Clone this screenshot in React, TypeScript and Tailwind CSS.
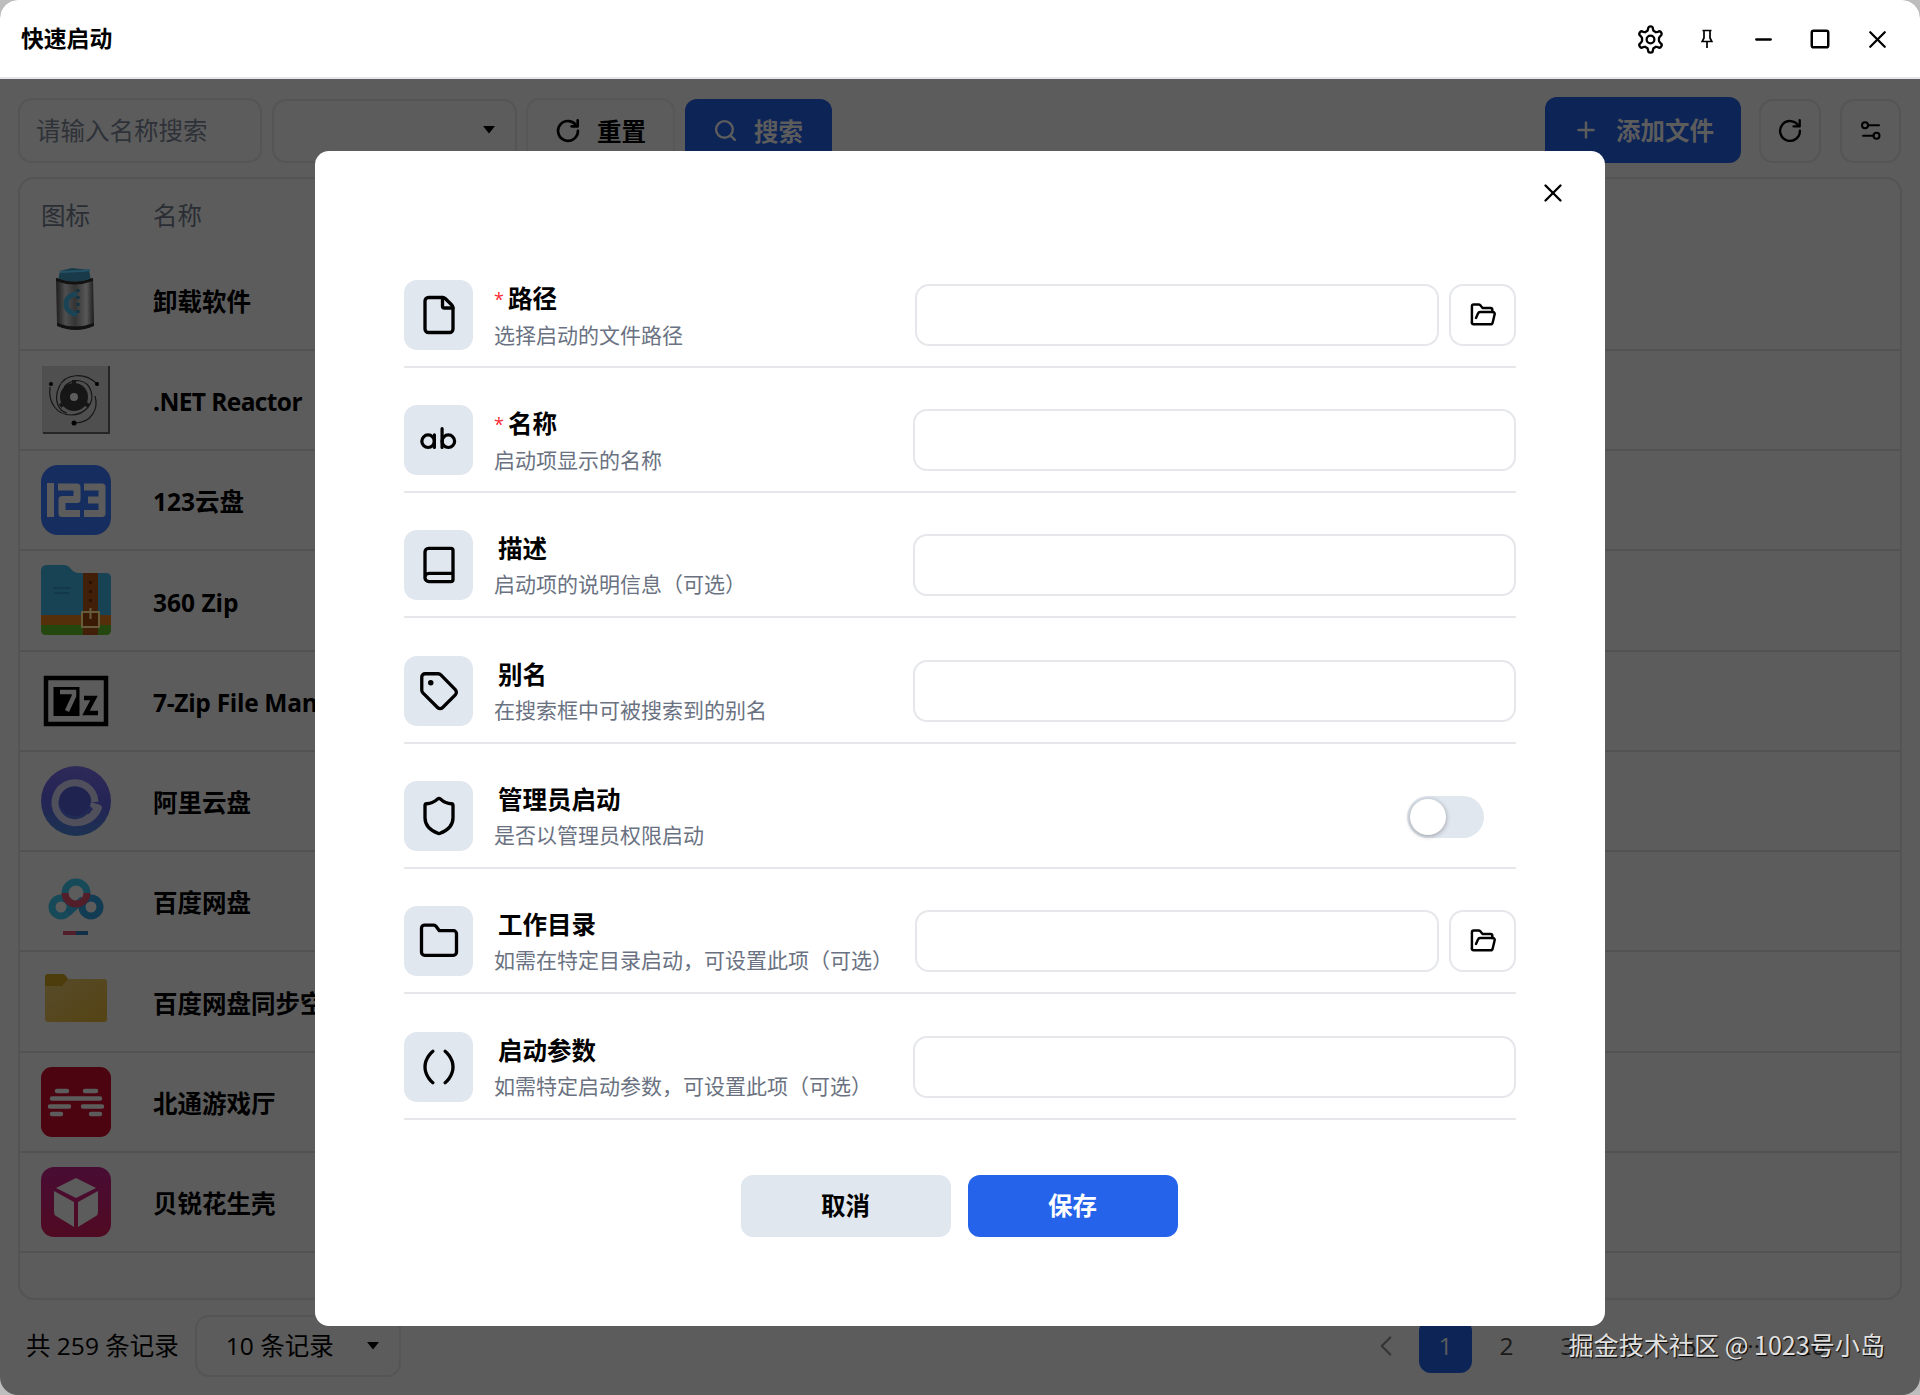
import React from 'react';
import { File, Plus, Search, X, Square, Minus, ChevronLeft, ChevronRight } from 'lucide-react';

const APPS = [
  { name: '卸载软件', icon: UninstallIcon },
  { name: '.NET Reactor', icon: ReactorIcon, nameClass: 'tracking-[-0.6px]' },
  { name: '123云盘', icon: Pan123Icon },
  { name: '360 Zip', icon: Zip360Icon },
  { name: '7-Zip File Manager', icon: SevenZipIcon, nameClass: 'tracking-[-0.3px]' },
  { name: '阿里云盘', icon: AliIcon },
  { name: '百度网盘', icon: BaiduIcon },
  { name: '百度网盘同步空间', icon: YellowFolderIcon },
  { name: '北通游戏厅', icon: BeitongIcon },
  { name: '贝锐花生壳', icon: BoxIcon },
];

const FIELDS = [
  { label: '路径', desc: '选择启动的文件路径', icon: <File size={42} strokeWidth={1.9} />, required: true, type: 'file' },
  { label: '名称', desc: '启动项显示的名称', icon: <AbIcon />, required: true, type: 'text' },
  { label: '描述', desc: '启动项的说明信息（可选）', icon: <BookIcon />, type: 'text' },
  { label: '别名', desc: '在搜索框中可被搜索到的别名', icon: <TagIcon />, type: 'text' },
  { label: '管理员启动', desc: '是否以管理员权限启动', icon: <ShieldIcon />, type: 'switch' },
  { label: '工作目录', desc: '如需在特定目录启动，可设置此项（可选）', icon: <FolderIcon />, type: 'file' },
  { label: '启动参数', desc: '如需特定启动参数，可设置此项（可选）', icon: <ParenIcon />, type: 'text' },
];

function Stroke({ size = 42, width = 1.9, children }: { size?: number; width?: number; children: React.ReactNode }) {
  return (
    <svg width={size} height={size} viewBox="0 0 24 24" fill="none" stroke="currentColor" strokeWidth={width} strokeLinecap="round" strokeLinejoin="round">
      {children}
    </svg>
  );
}

function AbIcon() {
  return (
    <Stroke size={43} width={1.8}>
      <circle cx="6.200" cy="12.400" r="3.500" />
      <path d="M9.700 8.900v7M14 5.400v10.500" />
      <circle cx="17.500" cy="12.400" r="3.500" />
    </Stroke>
  );
}

function BookIcon() {
  return (
    <Stroke>
      <path d="M4 19V4.500A2 2 0 0 1 6 2.500H18.800A1.200 1.200 0 0 1 20 3.700V20.300A1.200 1.200 0 0 1 18.800 21.500H6.300A2.300 2.300 0 0 1 6.300 16.800H20" />
    </Stroke>
  );
}

function TagIcon() {
  return (
    <Stroke size={44} width={1.8}>
      <path d="M11.600 2.600H4.400A1.800 1.800 0 0 0 2.600 4.400v7.200a2 2 0 0 0 .6 1.400l8 8a2 2 0 0 0 2.800 0l6.900-6.900a2 2 0 0 0 0-2.800l-7.900-8.100A2 2 0 0 0 11.600 2.600z" />
      <circle cx="7.500" cy="7.500" r=".6" fill="currentColor" />
    </Stroke>
  );
}

function ShieldIcon() {
  return (
    <Stroke>
      <path d="M20 13c0 5-3.500 7.500-7.700 9a1 1 0 0 1-.6 0C7.500 20.500 4 18 4 13V6a1 1 0 0 1 1-1c2 0 4.500-1.200 6.200-2.700a1.200 1.200 0 0 1 1.600 0C14.500 3.800 17 5 19 5a1 1 0 0 1 1 1z" />
    </Stroke>
  );
}

function FolderIcon() {
  return (
    <Stroke>
      <path d="M20.200 20.200a1.800 1.800 0 0 0 1.800-1.800V7.900a1.800 1.800 0 0 0-1.800-1.800h-8L10.300 3.600A1.500 1.500 0 0 0 9 2.900H3.800A1.800 1.800 0 0 0 2 4.700v13.700A1.800 1.800 0 0 0 3.800 20.200z" />
    </Stroke>
  );
}

function ParenIcon() {
  return (
    <Stroke>
      <path d="M8.500 3S4 6.500 4 12s4.500 9 4.500 9M15.500 3S20 6.500 20 12s-4.500 9-4.500 9" />
    </Stroke>
  );
}

function RefreshIcon({ size = 28, width = 2 }: { size?: number; width?: number }) {
  return (
    <Stroke size={size} width={width}>
      <path d="M19.300 7.600A8.500 8.500 0 1 0 20.500 11.800" />
      <path d="M20.300 2.800v5.200h-5.200" />
    </Stroke>
  );
}

function GearIcon() {
  return (
    <Stroke size={29} width={1.9}>
      <path d="M10 3.200a2 2 0 0 1 4 0l.5 1.600 2 1.200 1.700-.4a2 2 0 0 1 2 3.500L19 10.700v2.600l1.200 1.600a2 2 0 0 1-2 3.500l-1.700-.4-2 1.200-.5 1.600a2 2 0 0 1-4 0l-.5-1.600-2-1.200-1.700.4a2 2 0 0 1-2-3.500L5 13.300v-2.600L3.800 9.100a2 2 0 0 1 2-3.500l1.700.4 2-1.200z" />
      <circle cx="12" cy="12" r="3.200" />
    </Stroke>
  );
}

function PinIcon() {
  return (
    <svg width="14" height="20" viewBox="0 0 14 20" fill="none" stroke="currentColor" strokeWidth="1.700">
      <path d="M2.500 1.500h9M4 1.500v7.500L2.200 12.500h9.600L10 9V1.500M7 12.500V19" />
    </svg>
  );
}

function SlidersIcon() {
  return (
    <Stroke size={24} width={2}>
      <circle cx="6" cy="6.300" r="3" />
      <path d="M9 6.300H20M4 16.800h10.500" />
      <circle cx="17.500" cy="16.800" r="3" />
    </Stroke>
  );
}

function Caret() {
  return (
    <svg width="12" height="8" viewBox="0 0 12 8">
      <path d="M0 0h12L6 7.500z" fill="#000" />
    </svg>
  );
}

function UninstallIcon() {
  return (
    <svg width="70" height="70" viewBox="0 0 70 70">
      <defs>
        <linearGradient id="can">
          <stop offset="0" stopColor="#1c1c1c" />
          <stop offset=".25" stopColor="#4f4f4f" />
          <stop offset=".5" stopColor="#343434" />
          <stop offset=".8" stopColor="#585858" />
          <stop offset="1" stopColor="#1c1c1c" />
        </linearGradient>
      </defs>
      <path d="M19 6l12-3 17 2 2 11H17z" fill="#183a49" />
      <path d="M19 7l22-1 8-1" stroke="#245368" strokeWidth="2" fill="none" />
      <path d="M15 13q19 7 37 0l1 46q-18 8-37 0z" fill="url(#can)" />
      <path d="M15 13q19 7 37 0v3q-19 7-37 0zM16 58q18 7 37 0v3q-18 8-37 0z" fill="#121212" />
      <path d="M36 29a11 10 0 0 0 0 20" stroke="#1a4556" strokeWidth="5" fill="none" />
      <path d="M37 24v25" stroke="#123240" strokeWidth="3" strokeDasharray="3 4" />
    </svg>
  );
}

function ReactorIcon() {
  return (
    <svg width="70" height="70" viewBox="0 0 70 70">
      <rect x="1" y="1" width="67" height="67" fill="#4f4f4f" />
      <path d="M68 1v67H2" stroke="#252525" strokeWidth="2" fill="none" />
      <g stroke="#161616" strokeWidth="1.200" fill="none">
        <path d="M9 22C7 38 16 50 30 50s24-12 20-24-18-14-27-4" />
        <path d="M56 19C44 7 24 8 18 22s0 24 8 26" />
        <path d="M34 58c16 0 24-14 20-27" />
      </g>
      <circle cx="33" cy="32" r="14" fill="#161616" />
      <path d="M33 15v8M19 41l6-4M48 41l-6-4" stroke="#161616" strokeWidth="4" />
      <circle cx="33" cy="32" r="4" fill="#5c5c5c" />
      <circle cx="10" cy="19" r="2" />
      <circle cx="56" cy="19" r="2" />
      <circle cx="33" cy="58" r="2.500" />
    </svg>
  );
}

function Pan123Icon() {
  return (
    <svg width="70" height="70" viewBox="0 0 70 70">
      <rect width="70" height="70" rx="17" fill="#162d60" />
      <g stroke="#5c5c5c" strokeWidth="7" fill="none" strokeLinejoin="round">
        <path d="M9.500 18v34" />
        <path d="M17 22h19v12.500H21v14h18" />
        <path d="M43 22h18v26.500H43M47 35h14" />
      </g>
    </svg>
  );
}

function Zip360Icon() {
  return (
    <svg width="70" height="70" viewBox="0 0 70 70">
      <path d="M0 6q0-6 6-6h17q4 0 7 4t8 4h27q5 0 5 5v42H0z" fill="#174354" />
      <path d="M0 50h70v12H0z" fill="#552e0a" />
      <path d="M0 60h70v5q0 5-5 5H5q-5 0-5-5z" fill="#24460f" />
      <path d="M42 8h15v62H42z" fill="#421f08" />
      <path d="M12 23h18M13 28h15" stroke="#123a4c" strokeWidth="2" />
      <rect x="41" y="47" width="17" height="15" stroke="#665c3c" strokeWidth="2" fill="#3a1a05" />
      <path d="M49.500 43v11" stroke="#665c3c" strokeWidth="2" />
      <path d="M49.500 16v22" stroke="#2a1303" strokeWidth="3" strokeDasharray="3 6" />
    </svg>
  );
}

function SevenZipIcon() {
  return (
    <svg width="70" height="70" viewBox="0 0 70 70">
      <rect x="5" y="12" width="60" height="46" fill="none" stroke="#000" strokeWidth="4.500" />
      <rect x="12.500" y="21" width="26" height="29" />
      <path d="M19 26h14v4l-7 15" stroke="#5c5c5c" strokeWidth="4.500" fill="none" />
      <path d="M43 32h10L45 47h12" stroke="#000" strokeWidth="4.500" fill="none" />
    </svg>
  );
}

function AliIcon() {
  return (
    <svg width="70" height="70" viewBox="0 0 70 70">
      <defs>
        <linearGradient id="ali" x1=".6" y1="0" x2=".5" y2="1">
          <stop offset="0" stopColor="#2e2a58" />
          <stop offset=".5" stopColor="#242455" />
          <stop offset="1" stopColor="#1c3252" />
        </linearGradient>
      </defs>
      <circle cx="35" cy="35" r="35" fill="url(#ali)" />
      <circle cx="34" cy="35" r="15" fill="#1e234f" />
      <path d="M54 36A20 20 0 1 0 49 50" stroke="#50505c" strokeWidth="7" fill="none" />
      <path d="M50 36l8 2.500q3 1 3 3.500A26 25 0 0 1 36 60v-7q10-1 16-10l-3-3z" fill="#50505c" />
    </svg>
  );
}

function BaiduIcon() {
  return (
    <svg width="70" height="70" viewBox="0 0 70 70" fill="none" strokeWidth="7">
      <circle cx="20" cy="41" r="9" stroke="#174a58" />
      <circle cx="50" cy="41" r="9" stroke="#123c54" />
      <path d="M27 47l15-14" stroke="#144558" strokeWidth="7" />
      <path d="M24 27a11 11 0 0 1 22 0" stroke="#174a58" />
      <path d="M24 27a11 11 0 0 0 22 0" stroke="#521e2a" />
      <path d="M22 67h13" stroke="#521e2a" strokeWidth="4" />
      <path d="M35 67h12" stroke="#122f48" strokeWidth="4" />
    </svg>
  );
}

function YellowFolderIcon() {
  return (
    <svg width="70" height="70" viewBox="0 0 70 70">
      <defs>
        <linearGradient id="fold" x2="1" y2="1">
          <stop offset="0" stopColor="#564b2a" />
          <stop offset="1" stopColor="#554313" />
        </linearGradient>
      </defs>
      <path d="M4 11q0-3 3-3h15q2 0 5 5v10H4z" fill="#4d3c0c" />
      <path d="M4 20h17l6-7h36q3 0 3 3v37q0 3-3 3H7q-3 0-3-3z" fill="url(#fold)" />
    </svg>
  );
}

function BeitongIcon() {
  return (
    <svg width="70" height="70" viewBox="0 0 70 70">
      <rect width="70" height="70" rx="11" fill="#4c0410" />
      <path d="M16 24h10M44 24h11M11 31.500h48M9 39.500h19M42 39.500h19M11 47h9M50 47h9" stroke="#5c5c5c" strokeWidth="4.500" strokeLinecap="round" />
    </svg>
  );
}

function BoxIcon() {
  return (
    <svg width="70" height="70" viewBox="0 0 70 70">
      <defs>
        <linearGradient id="box" x2="0" y2="1">
          <stop offset="0" stopColor="#480c34" />
          <stop offset="1" stopColor="#500a22" />
        </linearGradient>
      </defs>
      <rect width="70" height="70" rx="13" fill="url(#box)" />
      <path d="M35 11l20 10-20 10-20-10zM13 24l20 11v25L15 49q-2-1-2-4zM57 24L37 35v25l18-11q2-1 2-4z" fill="#5c5c5c" />
    </svg>
  );
}

function FormControl({ type }: { type: string }) {
  if (type === 'switch') {
    return (
      <div className="ml-auto mr-8 mt-[2px] flex h-[42px] w-[77px] items-center rounded-full bg-[#e1e7ef] px-[3px]">
        <div className="h-9 w-9 rounded-full bg-white shadow-[0_1px_5px_rgba(0,0,0,0.35)]" />
      </div>
    );
  }
  if (type === 'file') {
    return (
      <div className="ml-auto flex w-[601px] gap-[10px]">
        <div className="h-[62px] flex-1 rounded-[14px] border-2 border-gray-200" />
        <button className="flex h-[62px] w-[67px] items-center justify-center rounded-[14px] border-2 border-gray-200">
          <Stroke size={28} width={2.1}>
            <path d="M2.500 18.500V4.500A1.500 1.500 0 0 1 4 3h4.200a2 2 0 0 1 1.500.7l1.900 2.300h6.900A1.500 1.500 0 0 1 20 7.500v2" />
            <path d="M6 14.500l1.700-3.700A2 2 0 0 1 9.500 9.500h11a1.500 1.500 0 0 1 1.500 1.900l-1.700 7a2 2 0 0 1-2 1.600H4a1.500 1.500 0 0 1-1.500-1.500" />
          </Stroke>
        </button>
      </div>
    );
  }
  return <div className="ml-auto h-[62px] w-[603px] rounded-[14px] border-2 border-gray-200" />;
}

export default function App() {
  return (
    <div className="h-[1395px] w-[1920px] bg-[#bdbdbd] font-['Open_Sans','Noto_Sans_CJK_SC',sans-serif] text-black">
      <div className="relative flex h-full flex-col overflow-hidden rounded-[18px] bg-[#5c5c5c]">
        <header className="flex h-[79px] shrink-0 items-center border-b-2 border-[#e5e7eb] bg-white pl-[21px] pr-[28px] pt-[1px]">
          <h1 className="text-[22.800px] font-bold">快速启动</h1>
          <div className="ml-auto flex items-center">
            <GearIcon />
            <div className="ml-[35px] flex w-[14px]"><PinIcon /></div>
            <Minus className="ml-[37px]" size={25} strokeWidth={2.200} />
            <Square className="ml-[33px]" size={22} strokeWidth={2.700} />
            <X className="ml-[32px]" size={29} strokeWidth={1.900} />
          </div>
        </header>

        <div className="flex h-[84px] shrink-0 items-end pl-[18px] pr-[19px]">
          <div className="flex h-[65px] w-[244px] items-center rounded-[14px] border-2 border-[#555] pl-4 pt-[2px] text-[24.500px] text-[#2e3238]">请输入名称搜索</div>
          <div className="ml-[10px] flex h-[64px] w-[245px] items-center justify-end rounded-[14px] border-2 border-[#555] pb-[2px] pr-5"><Caret /></div>
          <button className="ml-[9px] flex h-[65px] w-[149px] items-center rounded-[14px] border-2 border-[#575757] pl-[26px] text-[24.500px] font-bold">
            <RefreshIcon size={28} width={2.300} />
            <span className="ml-[15px] pt-[3px]">重置</span>
          </button>
          <button className="ml-[10px] flex h-[64px] w-[147px] items-center rounded-[12px] bg-[#0d2457] pl-[28px] text-[24.500px] font-bold text-[#5c5c5c]">
            <Search className="mb-[2px]" size={25} strokeWidth={2.300} />
            <span className="ml-[16px] pt-[3px]">搜索</span>
          </button>
          <button className="ml-auto flex h-[66px] w-[196px] items-center rounded-[12px] bg-[#0d2457] pl-[28px] text-[24.500px] font-bold text-[#5c5c5c]">
            <Plus size={26} strokeWidth={2.300} />
            <span className="ml-[17px] pt-[3px]">添加文件</span>
          </button>
          <button className="ml-[18px] flex h-[64px] w-[62px] items-center justify-center rounded-[14px] border-2 border-[#555]"><RefreshIcon size={28} width={2} /></button>
          <button className="ml-[19px] flex h-[64px] w-[61px] items-center justify-center rounded-[14px] border-2 border-[#555]"><SlidersIcon /></button>
        </div>

        <div className="mx-[18px] mt-[14px] flex h-[1123px] shrink-0 flex-col rounded-[16px] border-2 border-[#545454]">
          <div className="flex h-[71.500px] shrink-0 items-center pl-[21px] pt-[4px] text-[24.500px] text-[#2a2e34]">
            <span className="w-[112px]">图标</span>
            <span>名称</span>
          </div>
          {APPS.map((app) => (
            <div key={app.name} className="flex h-[100.250px] shrink-0 items-center border-b-2 border-[#525252] pl-[21px]">
              <app.icon />
              <span className={`ml-[42px] whitespace-nowrap pt-[5px] text-[24.500px] font-bold ${app.nameClass ?? ''}`}>{app.name}</span>
            </div>
          ))}
        </div>

        <footer className="mt-[15px] flex h-[62px] shrink-0 items-center pl-[26px] text-[24.500px]">
          <span>共 259 条记录</span>
          <div className="ml-4 flex h-[62px] w-[206px] items-center justify-between rounded-[14px] border-2 border-[#555] pl-[29px] pr-5">
            <span>10 条记录</span>
            <Caret />
          </div>
          <div className="ml-auto flex items-center pr-[32px] text-[#1a1a1a]">
            <ChevronLeft className="mr-[16px] text-[#353535]" size={34} strokeWidth={1.500} />
            <span className="flex h-[54px] w-[53px] items-center justify-center rounded-[12px] bg-[#0d2457] text-[#5c5c5c]">1</span>
            <span className="ml-1 w-[61px] text-center">2</span>
            <span className="w-[61px] text-center">3</span>
            <span className="w-[61px] text-center">4</span>
            <span className="w-[61px] text-center">5</span>
            <span className="w-[61px] text-center">···</span>
            <span className="w-[61px] text-center">26</span>
            <ChevronRight className="ml-3 text-[#353535]" size={34} strokeWidth={1.500} />
          </div>
        </footer>

        <div className="absolute left-[315px] top-[151px] h-[1175px] w-[1290px] rounded-[14px] bg-white pl-[89px] pr-[89px] pt-[91.500px]">
          <X className="absolute right-[37px] top-[27px]" size={30} strokeWidth={1.900} />
          {FIELDS.map((field) => (
            <div key={field.label} className="flex h-[125.300px] w-[1112px] items-end border-b-2 border-gray-200 pb-4">
              <div className="flex h-[70px] w-[69px] shrink-0 items-center justify-center rounded-[13px] bg-[#e1e7ef]">{field.icon}</div>
              <div className="ml-[21px] flex h-[70px] flex-col whitespace-nowrap">
                <div className={`text-[24.500px] font-bold leading-[37px] ${field.required ? '' : 'pl-1'}`}>
                  {field.required && <span className="mr-1 align-[2px] text-[18px] font-normal text-red-500">*</span>}
                  {field.label}
                </div>
                <div className="text-[21px] leading-[35px] text-gray-500">{field.desc}</div>
              </div>
              <div className="ml-auto flex h-[70px] items-center">
                <FormControl type={field.type} />
              </div>
            </div>
          ))}
          <div className="mr-[2px] mt-[55px] flex justify-center gap-[17px] text-[24.500px] font-bold">
            <button className="h-[62px] w-[210px] rounded-[12px] bg-[#e1e7ef] pt-[2px]">取消</button>
            <button className="h-[62px] w-[210px] rounded-[12px] bg-[#2563eb] pt-[2px] text-white">保存</button>
          </div>
        </div>

        <div className="absolute bottom-[33px] right-[35px] font-['Noto_Sans_CJK_SC',sans-serif] text-[25.100px] leading-9 text-[#e0e0e0] [text-shadow:1px_1px_1px_#000]">掘金技术社区 @ 1023号小岛</div>
      </div>
    </div>
  );
}
